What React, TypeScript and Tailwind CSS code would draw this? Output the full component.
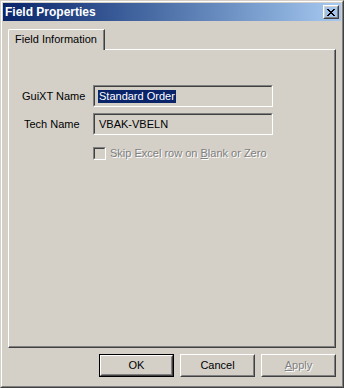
import React from 'react'

const font = { fontFamily: '"Liberation Sans", Tahoma, sans-serif' }

function Raised({ children, className = '' }: { children: React.ReactNode; className?: string }) {
  // classic win32 3D bevel: white/gray outer, light/dark inner
  return (
    <div className={`border border-t-white border-l-white border-b-[#404040] border-r-[#404040] ${className}`}>
      <div className="h-full w-full border border-t-[#d4d0c8] border-l-[#d4d0c8] border-b-[#808080] border-r-[#808080] flex items-center justify-center">
        {children}
      </div>
    </div>
  )
}

function Sunken({ children, className = '' }: { children?: React.ReactNode; className?: string }) {
  return (
    <div className={`border border-t-[#808080] border-l-[#808080] border-b-white border-r-white ${className}`}>
      <div className="h-full w-full border border-t-[#404040] border-l-[#404040] border-b-[#d4d0c8] border-r-[#d4d0c8] flex items-center">
        {children}
      </div>
    </div>
  )
}

function DlgButton({ label, underline, isDefault, disabled }: { label: string; underline?: number; isDefault?: boolean; disabled?: boolean }) {
  const text =
    underline === undefined ? (
      label
    ) : (
      <>
        {label.slice(0, underline)}
        <span className="underline">{label[underline]}</span>
        {label.slice(underline + 1)}
      </>
    )
  return (
    <div className={clsxBorder(isDefault)}>
      <Raised className="h-full w-full">
        <span
          className={disabled ? 'text-[#808080] [text-shadow:1px_1px_0_#fff]' : 'text-black'}
        >
          {text}
        </span>
      </Raised>
    </div>
  )
}

function clsxBorder(isDefault?: boolean) {
  return isDefault ? 'w-[75px] h-[23px] border border-black' : 'w-[75px] h-[23px]'
}

export default function App() {
  return (
    <div
      className="w-[344px] h-[388px] bg-[#d4d0c8] border border-t-[#d4d0c8] border-l-[#d4d0c8] border-b-[#404040] border-r-[#404040] text-[11px] text-black"
      style={font}
    >
      <div className="h-full w-full border border-t-white border-l-white border-b-[#808080] border-r-[#808080] p-px flex flex-col">
        {/* title bar */}
        <div className="h-[18px] flex items-center justify-between pl-[2px] pr-[2px] bg-gradient-to-r from-[#0a246a] to-[#a6caf0]">
          <span className="text-white font-bold text-[12px] leading-none">Field Properties</span>
          <Raised className="w-[16px] h-[14px]">
            <svg width="8" height="7" viewBox="0 0 8 7" shapeRendering="crispEdges">
              <path d="M0 0h2v1H0zM6 0h2v1H6zM1 1h2v1H1zM5 1h2v1H5zM2 2h4v1H2zM3 3h2v1H3zM2 4h4v1H2zM1 5h2v1H1zM5 5h2v1H5zM0 6h2v1H0zM6 6h2v1H6z" fill="#000" />
            </svg>
          </Raised>
        </div>

        <div className="flex-1 flex flex-col px-[5px] pt-[8px]">
          {/* tab strip */}
          <div className="flex">
            <div className="relative z-10 -mb-px h-[21px] w-[97px] bg-[#d4d0c8] border-t border-l border-t-white border-l-white border-r border-r-[#404040] rounded-tl-[2px]">
              <div className="h-full border-r border-r-[#808080] flex items-center justify-center pb-[2px]">
                Field Information
              </div>
            </div>
          </div>

          {/* tab page */}
          <div className="h-[299px] border border-t-white border-l-white border-b-[#404040] border-r-[#404040]">
            <div className="h-full border-b border-r border-b-[#808080] border-r-[#808080] pl-[13px] pt-[35px] flex flex-col">
              <div className="flex items-center h-[22px]">
                <span className="w-[71px]">GuiXT Name</span>
                <Sunken className="w-[180px] h-[22px]">
                  <span className="ml-[3px] px-px bg-[#0a246a] text-white leading-[13px]">Standard Order</span>
                </Sunken>
              </div>
              <div className="flex items-center h-[22px] mt-[6px]">
                <span className="w-[71px] pl-[2px]">Tech Name</span>
                <Sunken className="w-[180px] h-[22px]">
                  <span className="ml-[4px]">VBAK-VBELN</span>
                </Sunken>
              </div>
              <div className="flex items-center mt-[10px] ml-[71px]">
                <Sunken className="w-[13px] h-[13px]" />
                <span className="ml-[4px] text-[#808080] [text-shadow:1px_1px_0_#fff]">
                  Skip Excel row on <span className="underline">B</span>lank or Zero
                </span>
              </div>
            </div>
          </div>

          {/* buttons */}
          <div className="flex justify-end gap-[6px] mt-[6px]">
            <DlgButton label="OK" isDefault />
            <DlgButton label="Cancel" />
            <DlgButton label="Apply" underline={0} disabled />
          </div>
        </div>
      </div>
    </div>
  )
}
